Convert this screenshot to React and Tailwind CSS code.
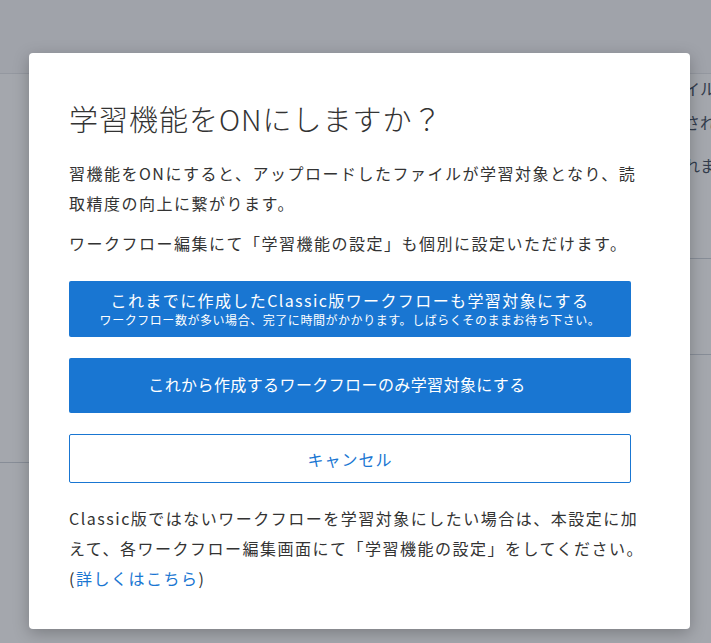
import React from "react";

const font = { fontFamily: '"Noto Sans CJK JP", "Noto Sans", sans-serif' };

function BackgroundPage() {
  return (
    <div className="h-[643px] w-[711px] overflow-hidden bg-white text-gray-600">
      <div className="h-[74px] border-b border-gray-200 bg-[#f9f9fa]" />
      <div className="flex">
        <div className="w-[443px] shrink-0">
          <div className="h-[389px] border-b border-gray-300" />
        </div>
        <div className="flex-1 pl-[17px] text-[16px] leading-[20px] whitespace-nowrap">
          <div className="mt-[4px]">アップロードされた帳票のファイル名</div>
          <div className="mt-[14px]">読取結果はワークフローに保存されます</div>
          <div className="mt-[23px]">処理が完了すると通知が送信されます</div>
          <div className="h-[84px] border-b border-gray-300" />
          <div className="h-[96px] border-b border-gray-300" />
        </div>
      </div>
    </div>
  );
}

function LearningDialog() {
  return (
    <div className="absolute left-[29px] top-[53px] w-[661px] rounded-[4px] bg-white pl-[40px] pr-[40px] pt-[43px] pb-[36px] text-[#333333] shadow-[0_4px_16px_rgba(0,0,0,0.25)]">
      <h2 className="text-[29px] leading-[44px] tracking-[1px] font-light">
        学習機能をONにしますか？
      </h2>
      <p className="mt-[18px] text-[16px] leading-[30px] tracking-[1.5px]">
        習機能をONにすると、アップロードしたファイルが学習対象となり、読取精度の向上に繋がります。
      </p>
      <p className="mt-[10px] text-[16px] leading-[30px] tracking-[1.5px]">
        ワークフロー編集にて「学習機能の設定」も個別に設定いただけます。
      </p>

      <button className="mt-[23px] flex h-[56px] w-[562px] flex-col items-center justify-center rounded-[2px] bg-[#1976d2] text-white">
        <span className="text-[16px] leading-[22px] tracking-[1.4px]">
          これまでに作成したClassic版ワークフローも学習対象にする
        </span>
        <span className="text-[12px] leading-[18px] tracking-[0.55px]">
          ワークフロー数が多い場合、完了に時間がかかります。しばらくそのままお待ち下さい。
        </span>
      </button>
      <button className="mt-[21px] flex h-[55px] w-[562px] items-center justify-center rounded-[2px] bg-[#1976d2] pr-[26px] pb-[4px] text-[16px] tracking-[0.4px] text-white">
        これから作成するワークフローのみ学習対象にする
      </button>
      <button className="mt-[21px] flex h-[49px] w-[562px] items-center justify-center rounded-[2px] border border-[#1976d2] bg-white text-[16px] tracking-[1px] text-[#1976d2]">
        キャンセル
      </button>

      <p className="mt-[20px] text-[16px] leading-[30px] tracking-[1.5px]">
        Classic版ではないワークフローを学習対象にしたい場合は、本設定に加えて、各ワークフロー編集画面にて「学習機能の設定」をしてください。
        <br />
        (<a className="text-[#1976d2]" href="#">詳しくはこちら</a>)
      </p>
    </div>
  );
}

export default function App() {
  return (
    <div className="relative h-[643px] w-[711px] overflow-hidden" style={font}>
      <BackgroundPage />
      <div className="absolute inset-0 bg-[#111827]/[0.38]" />
      <LearningDialog />
    </div>
  );
}
